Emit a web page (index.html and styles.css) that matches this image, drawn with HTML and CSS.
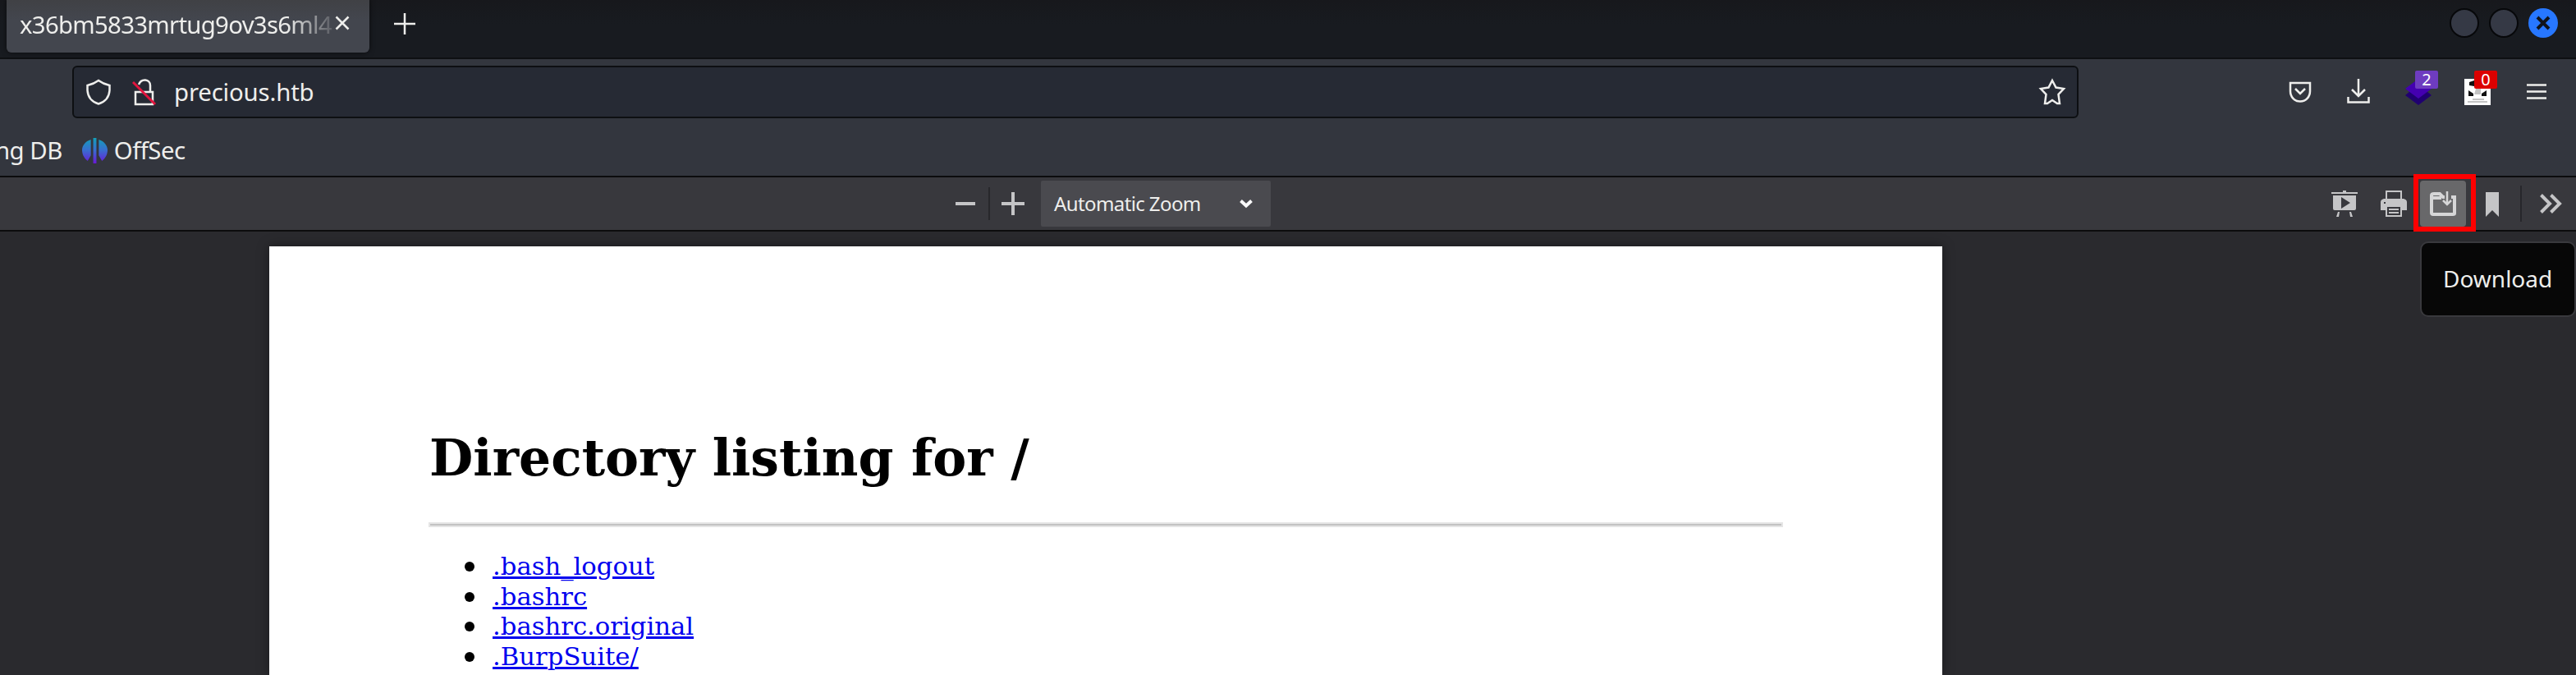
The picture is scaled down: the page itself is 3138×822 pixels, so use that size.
FILE: index.html
```html
<!DOCTYPE html>
<html lang="en">
<head>
<meta charset="utf-8">
<title>precious.htb</title>
<link rel="stylesheet" href="styles.css">
</head>
<body>
<header class="tabbar">
  <div class="tab"><span class="tab-title">x36bm5833mrtug9ov3s6ml4</span>
    <svg class="tab-close" viewBox="0 0 18 18"><path d="M1.500 1.500L16.500 16.500M16.500 1.500L1.500 16.500"/></svg></div>
  <svg class="new-tab" viewBox="0 0 26 26"><path d="M13 0V26M0 13H26"/></svg>
  <div class="window-buttons">
    <span class="wbtn"></span><span class="wbtn"></span>
    <span class="wbtn wbtn-close"><svg viewBox="0 0 16 16"><path d="M1 1L15 15M15 1L1 15"/></svg></span>
  </div>
</header>
<nav class="navbar">
  <div class="urlbar">
    <svg class="i-shield" viewBox="0 0 32 32"><path d="M16 2C12 5 7 7 2.500 8V14C3 22 8 28 16 30.500C24 28 29 22 29.500 14V8C25 7 20 5 16 2Z"/></svg>
    <svg class="i-lock" viewBox="0 0 30 32"><path d="M8 7C11 -1 22 0 22 8V15M4 16H25V31H4Z"/><path class="slash" d="M1 4L28 31"/></svg>
    <span class="url">precious.htb</span>
    <svg class="i-star" viewBox="0 0 32 32"><path d="M16 2L20.500 10.500L30 12L23.500 19L25 30H22L16 26L10 30H7L8.500 19L2 12L11.500 10.500Z"/></svg>
  </div>
  <div class="actions">
    <svg class="i28" viewBox="0 0 28 28"><path d="M2 3H26V13C26 20 21 25.500 14 25.500S2 20 2 13ZM8 10L14 16L20 10"/></svg>
    <svg class="i28 i-dl" viewBox="0 0 28 30"><path d="M14 0V21M6 13L14 21L22 13M1.500 22V28.500H26.500V22"/></svg>
    <span class="ext"><svg viewBox="0 0 32 32"><path fill="#200070" d="M0 20L6 15H26L32 20L16 32Z"/><path fill="#4400b0" d="M0 12L16 0L32 12L16 24Z"/></svg><b class="badge purple">2</b></span>
    <span class="ext"><svg viewBox="0 0 32 32"><path fill="#fff" d="M0 0H32V32H0Z"/><path fill="#111" d="M6 4L12 2V9L6 8ZM5 14L11 18V21H5ZM27 14L21 18V21H27Z"/><path fill="#c4c4c4" d="M14 12H20V19H12ZM10 24H24V26H10ZM4 27H28V29H4Z"/></svg><b class="badge red">0</b></span>
    <svg class="i-menu" viewBox="0 0 24 20"><path d="M0 1.500H24M0 9.500H24M0 17.500H24"/></svg>
  </div>
</nav>
<div class="bookmarks"><span>ng DB</span>
  <svg viewBox="0 0 32 32"><defs><linearGradient id="g" x1="0" y1="0" x2="0" y2="32" gradientUnits="userSpaceOnUse"><stop offset="0" stop-color="#12a0b8"/><stop offset=".5" stop-color="#3a6bd0"/><stop offset="1" stop-color="#6a18d8"/></linearGradient></defs><path fill="url(#g)" d="M11 2V22L7 29C2 25 0 20 0 15S4 4 11 2ZM21 2V22L25 29C30 25 32 20 32 15S28 4 21 2ZM14 0H18V32H14Z"/></svg>
  <span>OffSec</span></div>
<div class="pdfbar">
  <div class="zoom">
    <svg class="minus" viewBox="0 0 24 4"><path d="M0 2H24"/></svg><i class="sep"></i>
    <svg class="plus" viewBox="0 0 28 28"><path d="M14 0V28M0 14H28"/></svg>
    <div class="select"><span>Automatic Zoom</span><svg viewBox="0 0 16 10"><path d="M1.500 1.500L8 7.500L14.500 1.500"/></svg></div>
  </div>
  <div class="tools">
    <svg class="t" viewBox="0 0 32 32"><path fill-rule="evenodd" d="M14 0H18V2H32V4H0V2H14ZM2 6H30V22Q30 24 28 24H4Q2 24 2 22ZM12 8V22L23 15ZM8 26H10L9 32H6ZM22 26H24L26 32H23Z"/></svg>
    <svg class="t" viewBox="0 0 32 32"><path fill-rule="evenodd" d="M6 0H26V10H28Q32 11 32 14V24H26V32H6V24H0V14Q0 11 4 10H6ZM8 2V10H24V2ZM8 20V30H24V20ZM10 22H22V24H10ZM10 26H22V28H10ZM4 14V16H6V14Z"/></svg>
    <span class="dl"><svg viewBox="0 0 32 32"><path d="M2 27V6Q2 4 5 4H12L16 8H18M2 9H14M26 8H30V28Q30 29 28 29H4Q2 29 2 27" fill="none" stroke="#d6d6d7" stroke-width="4"/><path d="M21 1V17M16 12L21 17L26 12" fill="none" stroke="#d6d6d7" stroke-width="2.500"/></svg></span>
    <svg class="mark" viewBox="0 0 16 30"><path d="M0 0H16V30L8 22L0 30Z"/></svg><i class="sep"></i>
    <svg class="more" viewBox="0 0 26 24"><path d="M1.500 1.500L12 12L1.500 22.500M13.500 1.500L24 12L13.500 22.500"/></svg>
  </div>
</div>
<main class="viewer">
  <article class="page">
    <h1>Directory listing for /</h1>
    <hr>
    <ul>
      <li><a>.bash_logout</a></li>
      <li><a>.bashrc</a></li>
      <li><a>.bashrc.original</a></li>
      <li><a>.BurpSuite/</a></li>
    </ul>
  </article>
</main>
<div class="highlight"></div>
<div class="tooltip">Download</div>
</body>
</html>
```

FILE: styles.css
```css
* { box-sizing: border-box; }
body { margin: 0; width: 3138px; height: 822px; overflow: hidden; position: relative; background: #2a2a2e; color: #eeeeec; font: 29.33px/40px "Noto Sans", sans-serif; }
svg { display: block; flex: none; fill: none; stroke: #eeeeec; stroke-width: 2.5; overflow: visible; }
.tabbar { display: flex; height: 72px; padding-left: 8px; background: linear-gradient(#17181c, #181b20 30px); border-bottom: 2px solid #0e1013; }
.tab { display: flex; width: 442px; height: 64px; padding: 10px 24px 0 16px; background: linear-gradient(#404145, #43464e 24px); border-radius: 0 0 6px 6px; box-shadow: 0 0 6px #0009; }
.tab-title { width: 382px; margin-right: 3px; white-space: nowrap; letter-spacing: -0.7px; -webkit-mask-image: linear-gradient(90deg, #000 325px, transparent 390px); mask-image: linear-gradient(90deg, #000 325px, transparent 390px); }
.tab-close { width: 18px; height: 18px; margin-top: 9px; }
.new-tab { width: 26px; height: 26px; margin: 16px 0 0 30px; stroke-width: 2.5; }
.window-buttons { display: flex; gap: 12px; margin: 10px 22px 0 auto; }
.wbtn { display: flex; align-items: center; justify-content: center; width: 36px; height: 36px; border: 2px solid #07080a; border-radius: 50%; background: #353945; }
.wbtn-close { border: 0; background: #2777ff; }
.wbtn-close svg { width: 16px; stroke: #10131a; stroke-width: 4; }
.navbar { display: flex; height: 76px; padding: 8px 36px 0 88px; background: #33363e; }
.urlbar { display: flex; align-items: center; width: 2444px; height: 64px; padding: 0 14px; background: #262a34; border: 2px solid #0d0f12; border-radius: 6px; }
.i-shield { width: 32px; height: 32px; }
.i-lock { width: 30px; height: 32px; margin-left: 25px; stroke-width: 2.5; }
.slash { stroke: #e2143e; stroke-width: 3; }
.url { margin-left: 21px; letter-spacing: -0.15px; }
.i-star { width: 32px; height: 32px; margin-left: auto; }
.actions { display: flex; align-items: flex-start; flex: 1; padding-left: 256px; }
.i28 { width: 28px; height: 28px; margin-top: 18px; }
.i-dl { height: 30px; margin: 16px 0 0 43px; }
.ext { position: relative; width: 32px; height: 32px; margin: 16px 0 0 43px; }
.ext + .ext { margin-left: 40px; }
.ext svg { width: 32px; height: 32px; stroke: none; }
.badge { position: absolute; left: 12px; top: -10px; width: 28px; height: 22px; border-radius: 2px; color: #fff; font: 20px/22px "Noto Sans", sans-serif; text-align: center; }
.purple { background: #6e3cc0; }
.red { background: #dc0000; }
.i-menu { width: 24px; height: 20px; margin: 22px 0 0 auto; }
.bookmarks { display: flex; height: 68px; padding-top: 15px; background: #33363e; border-bottom: 2px solid #0c0c0d; letter-spacing: -0.5px; }
.bookmarks span:first-child { margin-left: -6px; }
.bookmarks svg { width: 31px; height: 31px; margin: 5px 8px 0 24px; stroke: none; }
.pdfbar { display: flex; justify-content: space-between; height: 66px; background: #38383d; border-bottom: 2px solid #0c0c0d; }
.pdfbar svg { stroke: #c5c5c7; stroke-width: 4; }
.zoom { display: flex; align-items: center; padding-left: 1164px; }
.minus { width: 24px; height: 4px; }
.plus { width: 28px; height: 28px; }
.sep { width: 2px; height: 40px; margin: 0 14px 0 16px; background: #27272b; }
.select { display: flex; align-items: center; justify-content: space-between; width: 280px; height: 56px; margin-left: 20px; padding: 0 22px 0 16px; border-radius: 2px; background: #4a4a4f; font-size: 24px; letter-spacing: -0.6px; }
.zoom .select svg { width: 16px; height: 10px; stroke: #f9f9fa; }
.tools { display: flex; align-items: center; padding-right: 18px; }
.pdfbar .t, .pdfbar .mark { width: 32px; height: 32px; margin-right: 28px; fill: #c5c5c7; stroke: none; }
.dl { display: flex; align-items: center; justify-content: center; width: 56px; height: 56px; margin-left: -12px; border-radius: 4px; background: #68686a; }
.dl svg { width: 32px; height: 32px; }
.pdfbar .mark { width: 16px; height: 30px; margin: 2px 0 0 24px; }
.tools .sep { height: 44px; margin: 0 22px 0 26px; }
.more { width: 26px; height: 24px; }
.viewer { padding: 18px 0 0 328px; }
.page { width: 2038px; height: 522px; padding: 221px 194px 0; background: #fff; color: #000; box-shadow: 0 0 14px #0006; font: 30.7px/36.5px "DejaVu Serif", serif; }
h1 { margin: 0 0 41px 1px; font-size: 61.5px; line-height: 74px; }
hr { height: 6px; margin: 0; border: solid #e5e5e5; border-width: 2px; background: #c2c2c2; }
ul { margin: 30px 0 0; padding-left: 44px; list-style: none; }
li { display: flex; align-items: center; gap: 22px; }
li::before { content: ""; width: 12px; height: 12px; border-radius: 50%; background: #000; }
a { color: #0000ee; text-decoration: underline; }
.highlight { position: absolute; left: 2940px; top: 212px; width: 76px; height: 70px; border: 6px solid #f00; }
.tooltip { position: absolute; left: 2948px; top: 294px; width: 190px; height: 92px; padding: 23px 0 0 26px; border: 2px solid #39393d; border-radius: 10px; background: #070707; font-size: 28px; }
```
